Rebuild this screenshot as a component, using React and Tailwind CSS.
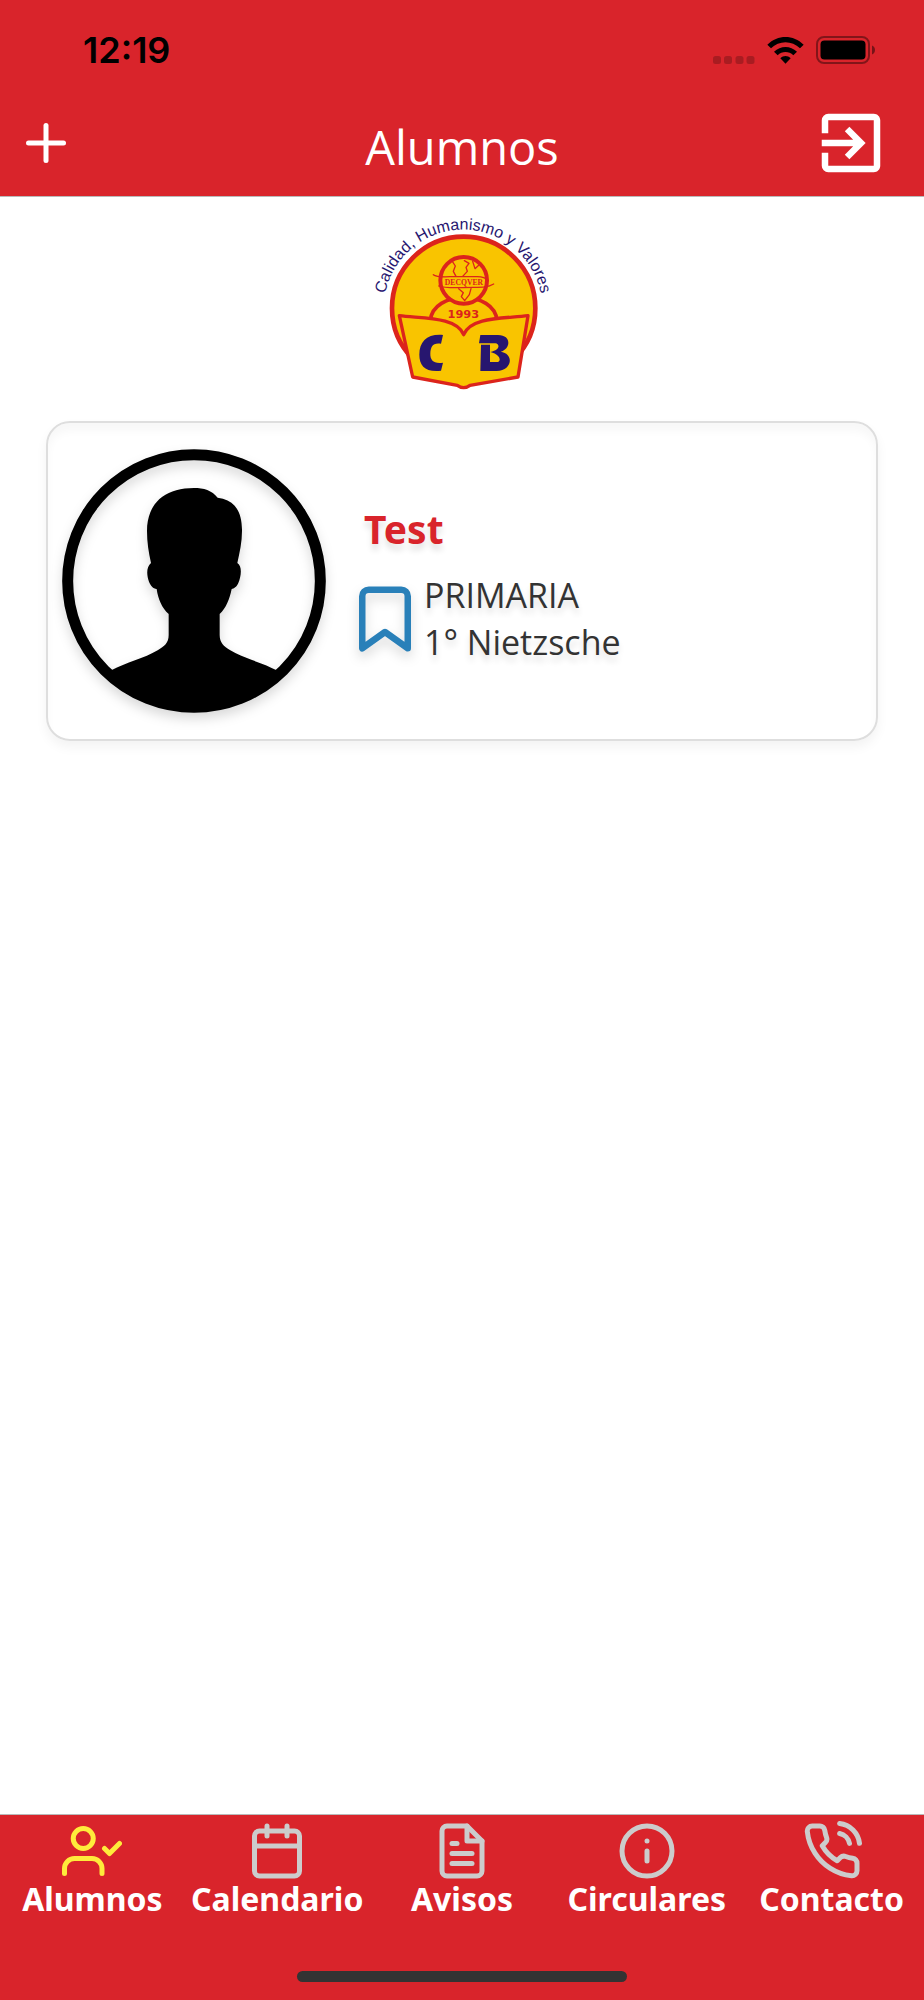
import React, { useState } from 'react';
import { FiUserCheck, FiCalendar, FiFileText, FiInfo, FiPhoneCall, FiBookmark, FiPlus } from 'react-icons/fi';
import { MdExitToApp } from 'react-icons/md';

const TABS = [
    { id: 'alumnos', label: 'Alumnos', Icon: FiUserCheck },
    { id: 'calendario', label: 'Calendario', Icon: FiCalendar },
    { id: 'avisos', label: 'Avisos', Icon: FiFileText },
    { id: 'circulares', label: 'Circulares', Icon: FiInfo },
    { id: 'contacto', label: 'Contacto', Icon: FiPhoneCall },
];

const ALUMNOS = [{ id: 1, nombre: 'Test', nivel: 'PRIMARIA', grupo: '1° Nietzsche' }];

function StatusBar() {
    return (
        <div className="flex h-[91px] items-center justify-between pt-2 pr-[48px] pl-[83px] text-black">
            <span className="font-['Inter',sans-serif] text-[36px] leading-none font-semibold">12:19</span>
            <div className="flex items-center gap-3">
                <svg width="42" height="28" viewBox="0 0 42 28" fill="#000" fillOpacity="0.22" aria-hidden="true">
                    <rect x="0" y="20" width="8" height="8" rx="2.5" />
                    <rect x="11" y="20" width="8" height="8" rx="2.5" />
                    <rect x="22.500" y="20" width="8" height="8" rx="2.5" />
                    <rect x="33.500" y="20" width="8" height="8" rx="2.5" />
                </svg>
                <svg width="37" height="28" viewBox="0 0 111 84" aria-hidden="true">
                    <path d="M1 26C32-5 79-5 110 26L99 37C75 13 36 13 12 37Z" />
                    <path d="M21 47C41 28 70 28 90 47L79 58C66 45 45 45 32 58Z" />
                    <path d="M40 67C49 58 62 58 71 67L55.500 83Z" />
                </svg>
                <svg width="60" height="28" viewBox="0 0 60 28" aria-hidden="true">
                    <rect x="1" y="1" width="52" height="26" rx="7" fill="none" stroke="#000" strokeOpacity="0.4" strokeWidth="2" />
                    <rect x="4.500" y="4.500" width="45" height="19" rx="4" />
                    <path d="M56 9.500c4 1.500 4 7.500 0 9z" fillOpacity="0.45" />
                </svg>
            </div>
        </div>
    );
}

function SchoolLogo() {
    return (
        <svg className="h-[204px] w-[204px]" viewBox="0 0 612 612" role="img" aria-label="Logo del colegio">
            <defs>
                <path id="lema" d="M71 327A238 238 0 0 1 547 327" />
            </defs>
            <text fill="#27166f" fontSize="48" fontFamily="'Liberation Sans', Arial, sans-serif" textAnchor="middle">
                <textPath href="#lema" startOffset="50%">Calidad, Humanismo y Valores</textPath>
            </text>
            <circle cx="311" cy="325" r="215" fill="#f9c400" stroke="#dc241c" strokeWidth="14" />
            <path d="M211 362C218 270 404 270 411 362" fill="none" stroke="#dc241c" strokeWidth="11" />
            <circle cx="311" cy="241" r="70" fill="#f9c400" stroke="#dc241c" strokeWidth="12" />
            <g fill="none" stroke="#dc241c" strokeWidth="4" strokeLinecap="round" strokeLinejoin="round">
                <path d="M220 224C230 232 250 231 270 230H352C366 230 376 232 384 242" />
                <path d="M236 258C256 266 285 263 340 262C370 262 384 262 401 252" />
                <path d="M277 184L286 198L280 214L288 229M313 182L327 190L318 202L322 214L308 229M338 184L345 206L356 196" />
                <path d="M296 266L310 278L304 290L314 302M333 266L328 284L314 302" />
            </g>
            <text x="312" y="255" fill="#dc241c" fontSize="23" fontWeight="700" fontFamily="'Liberation Serif', serif" textAnchor="middle">DECQVER</text>
            <text x="310" y="355" fill="#dc241c" fontSize="34" fontWeight="700" fontFamily="'DejaVu Sans', sans-serif" textAnchor="middle">1993</text>
            <path
                d="M118 347C190 356 290 350 311 404C332 350 432 356 504 347L474 531L330 556Q311 570 292 556L158 531Z"
                fill="#f9c400"
                stroke="#dc241c"
                strokeWidth="10"
                strokeLinejoin="round"
            />
            <path d="M249 405L243 431C218 427 212 440 211 460C210 482 222 492 249 488L243 512C196 517 178 498 178 464C178 424 202 401 249 405Z" fill="#27166f" />
            <path
                d="M361 405H414C456 405 452 447 422 455C464 461 456 513 410 513H361L363 434H390V486H411C424 486 424 464 391 456C421 450 420 432 406 430H357Z"
                fill="#27166f"
            />
        </svg>
    );
}

function Avatar() {
    return (
        <svg
            className="h-[264px] w-[264px] shrink-0 drop-shadow-[0_6px_6px_rgba(0,0,0,0.15)]"
            viewBox="0 0 792 792"
            aria-hidden="true"
        >
            <circle cx="396" cy="396" r="379" fill="none" stroke="#000" strokeWidth="33" />
            <path d="M396 117C425 117 450 124 467 146C520 152 541 190 540 246C540 280 533 310 526 342C542 352 537 383 529 402C523 415 516 418 509 420C503 450 492 478 473 495V558C473 580 485 592 505 604C545 628 600 640 644 664A364 364 0 0 1 148 664C192 640 247 628 287 604C307 592 320 582 320 558V495C300 478 288 450 284 420C273 419 266 410 261 398C254 380 252 354 267 342C260 310 255 280 255 246C256 160 310 117 396 117Z" />
            <path d="M148 664L644 664L600 720A379 379 0 0 1 192 720Z" />
        </svg>
    );
}

function AlumnoCard({ alumno }) {
    return (
        <button
            type="button"
            className="flex w-full items-center rounded-3xl border-2 border-[#dedede] px-3.5 py-[26px] text-left shadow-[0_6px_12px_rgba(0,0,0,0.05),inset_0_8px_8px_rgba(0,0,0,0.03)]"
        >
            <Avatar />
            <div className="ml-5 pt-1.5 text-shadow-[0_6px_6px_rgba(0,0,0,0.12)]">
                <h2 className="ml-[18px] font-['Noto_Sans',sans-serif] text-[39px] leading-[54px] font-bold text-[#d9242b]">{alumno.nombre}</h2>
                <div className="mt-4 flex items-center">
                    <FiBookmark size={78} className="text-[#2980b9] drop-shadow-[0_6px_6px_rgba(0,0,0,0.15)]" />
                    <div className="text-[34px] leading-[47px] text-[#333]">
                        <p>{alumno.nivel}</p>
                        <p>{alumno.grupo}</p>
                    </div>
                </div>
            </div>
        </button>
    );
}

export default function App() {
    const [activeTab, setActiveTab] = useState('alumnos');

    return (
        <div className="flex min-h-screen flex-col bg-white font-['Open_Sans',sans-serif]">
            <header className="border-b border-[#b9b9b9] bg-[#d9242b] text-white">
                <StatusBar />
                <div className="grid h-[105px] grid-cols-[1fr_auto_1fr] items-center pb-0.5">
                    <button type="button" aria-label="Agregar alumno" className="ml-4 justify-self-start">
                        <FiPlus size={60} />
                    </button>
                    <h1 className="pt-2 text-[47px] leading-[60px]">Alumnos</h1>
                    <button type="button" aria-label="Salir" className="mr-[34px] justify-self-end">
                        <MdExitToApp size={78} />
                    </button>
                </div>
            </header>

            <main className="flex flex-1 flex-col items-center px-[46px] pt-[3px]">
                <SchoolLogo />
                <div className="mt-[17px] w-full space-y-6">
                    {ALUMNOS.map((alumno) => (
                        <AlumnoCard key={alumno.id} alumno={alumno} />
                    ))}
                </div>
            </main>

            <footer className="border-t border-[#b9b9b9] bg-[#d9242b] pb-[18px]">
                <nav className="grid grid-cols-5 pt-1.5">
                    {TABS.map(({ id, label, Icon }) => (
                        <button
                            key={id}
                            type="button"
                            onClick={() => setActiveTab(id)}
                            aria-current={activeTab === id ? 'page' : undefined}
                            className="flex flex-col items-center"
                        >
                            <Icon size={60} className={activeTab === id ? 'text-[#ffeb3b]' : 'text-[#ccc]'} />
                            <span className="font-['Noto_Sans',sans-serif] text-[32px] leading-[36px] font-bold text-white">{label}</span>
                        </button>
                    ))}
                </nav>
                <div className="mx-auto mt-[54px] h-[11px] w-[330px] rounded-full bg-[#333]" />
            </footer>
        </div>
    );
}
